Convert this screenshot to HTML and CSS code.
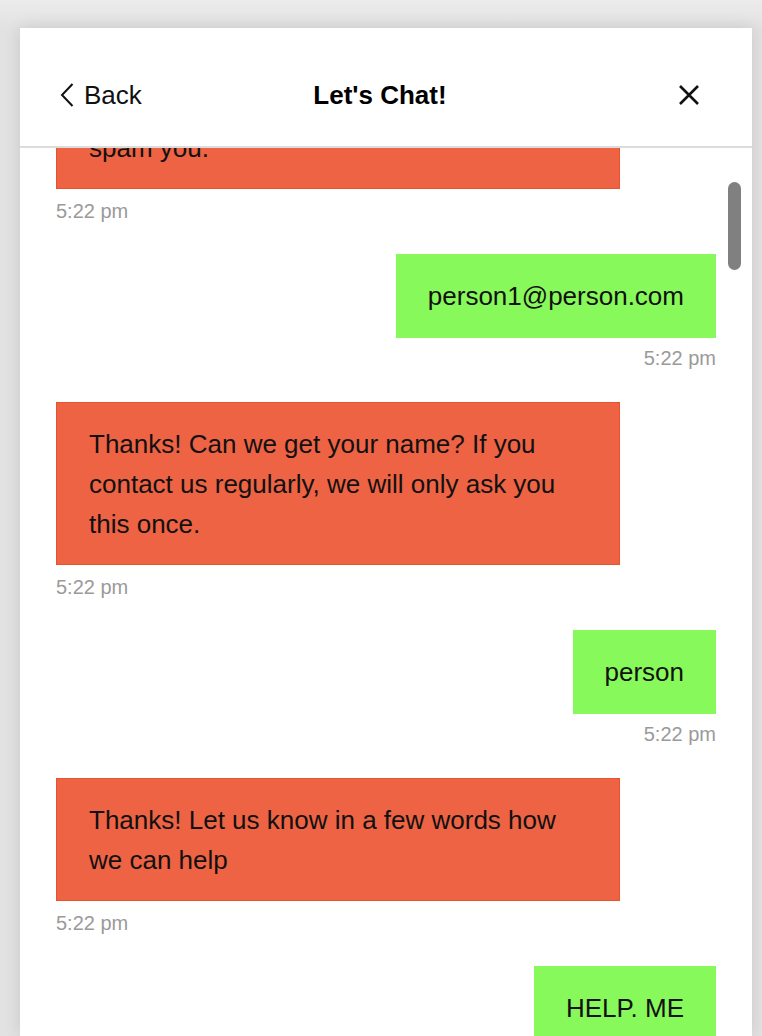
FILE: index.html
```html
<!DOCTYPE html>
<html>
<head>
<meta charset="utf-8">
<link rel="stylesheet" href="styles.css">
</head>
<body>
<div class="page">
  <div class="panel">
    <header class="header">
      <a class="back">
        <svg class="chev" width="14" height="24" viewBox="0 0 14 24"><path d="M12.5 1 L2 12 L12.5 23" fill="none" stroke="#111" stroke-width="2"/></svg>
        <span>Back</span>
      </a>
      <h1 class="title">Let's Chat!</h1>
      <div class="close">
        <svg width="22" height="22" viewBox="0 0 22 22"><path d="M2 2 L20 20 M20 2 L2 20" fill="none" stroke="#111" stroke-width="2.6"/></svg>
      </div>
    </header>
    <div class="scroll">
      <div class="list">
        <div class="msg bot">
          <div class="bubble">Can we get your email?<br>We promise we won't<br>spam you.</div>
          <div class="time">5:22 pm</div>
        </div>
        <div class="msg user">
          <div class="bubble">person1@person.com</div>
          <div class="time">5:22 pm</div>
        </div>
        <div class="msg bot">
          <div class="bubble">Thanks! Can we get your name? If you contact us regularly, we will only ask you this once.</div>
          <div class="time">5:22 pm</div>
        </div>
        <div class="msg user">
          <div class="bubble">person</div>
          <div class="time">5:22 pm</div>
        </div>
        <div class="msg bot">
          <div class="bubble">Thanks! Let us know in a few words how we can help</div>
          <div class="time">5:22 pm</div>
        </div>
        <div class="msg user">
          <div class="bubble">HELP. ME</div>
          <div class="time">5:22 pm</div>
        </div>
      </div>
      <div class="thumb"></div>
    </div>
  </div>
</div>
</body>
</html>
```

FILE: styles.css
```css
html, body {
  margin: 0;
  padding: 0;
}
body {
  background: #e6e6e6;
  font-family: "Liberation Sans", Arial, sans-serif;
  color: #111;
}
.page {
  height: 1036px;
  overflow: hidden;
  padding: 28px 10px 0 20px;
  box-sizing: border-box;
  background: linear-gradient(to bottom, #ececec 0, #e2e2e2 28px, #e2e2e2 100%);
}
.panel {
  background: #fff;
  height: 1008px;
  display: flex;
  flex-direction: column;
  box-shadow: 0 0 16px rgba(0, 0, 0, 0.12);
}
.header {
  height: 120px;
  box-sizing: border-box;
  flex: none;
  border-bottom: 2px solid #dcdcdc;
  display: grid;
  grid-template-columns: 1fr auto 1fr;
  align-items: center;
  padding: 16px 52px 0 40px;
}
.back {
  display: flex;
  align-items: center;
  gap: 10px;
  font-size: 26px;
  color: #111;
}
.chev {
  display: block;
}
.title {
  margin: 0;
  font-size: 26px;
  font-weight: bold;
  color: #000;
}
.close {
  justify-self: end;
  display: flex;
}
.close svg {
  display: block;
}
.scroll {
  flex: 1;
  overflow: hidden;
  position: relative;
}
.list {
  margin-top: -122px;
  padding: 0 36px;
  display: flex;
  flex-direction: column;
}
.msg {
  display: flex;
  flex-direction: column;
}
.bubble {
  font-size: 26px;
  line-height: 40px;
  box-sizing: border-box;
}
.bot .bubble {
  width: 564px;
  background: #ed6344;
  border: 1px solid #e6512e;
  padding: 20.5px 32px;
}
.user {
  align-items: flex-end;
}
.user .bubble {
  background: #88f95a;
  padding: 22px 32px;
}
.time {
  font-size: 20px;
  line-height: 26px;
  color: #9a9a9a;
}
.bot .time {
  margin: 9px 0 30px;
}
.user .time {
  margin: 7px 0 31px;
}
.thumb {
  position: absolute;
  top: 34px;
  right: 11px;
  width: 13px;
  height: 88px;
  border-radius: 7px;
  background: #808080;
}
```
